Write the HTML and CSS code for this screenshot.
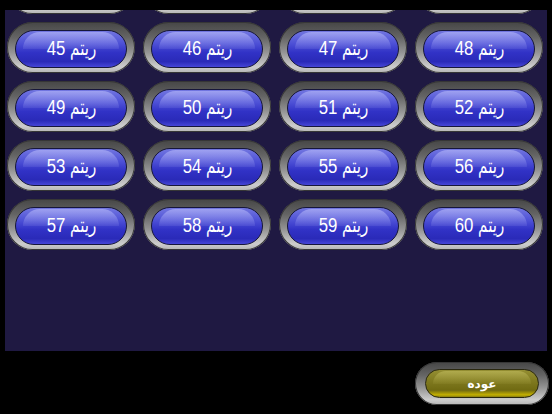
FILE: index.html
```html
<!DOCTYPE html>
<html lang="ar">
<head>
<meta charset="utf-8">
<link rel="stylesheet" href="styles.css">
</head>
<body>
<div class="panel">
  <div class="grid">
    <div class="btn"><div class="pill"></div></div>
    <div class="btn"><div class="pill"></div></div>
    <div class="btn"><div class="pill"></div></div>
    <div class="btn"><div class="pill"></div></div>
    <div class="btn"><div class="pill"><span class="label" dir="rtl">ريتم 45</span></div></div>
    <div class="btn"><div class="pill"><span class="label" dir="rtl">ريتم 46</span></div></div>
    <div class="btn"><div class="pill"><span class="label" dir="rtl">ريتم 47</span></div></div>
    <div class="btn"><div class="pill"><span class="label" dir="rtl">ريتم 48</span></div></div>
    <div class="btn"><div class="pill"><span class="label" dir="rtl">ريتم 49</span></div></div>
    <div class="btn"><div class="pill"><span class="label" dir="rtl">ريتم 50</span></div></div>
    <div class="btn"><div class="pill"><span class="label" dir="rtl">ريتم 51</span></div></div>
    <div class="btn"><div class="pill"><span class="label" dir="rtl">ريتم 52</span></div></div>
    <div class="btn"><div class="pill"><span class="label" dir="rtl">ريتم 53</span></div></div>
    <div class="btn"><div class="pill"><span class="label" dir="rtl">ريتم 54</span></div></div>
    <div class="btn"><div class="pill"><span class="label" dir="rtl">ريتم 55</span></div></div>
    <div class="btn"><div class="pill"><span class="label" dir="rtl">ريتم 56</span></div></div>
    <div class="btn"><div class="pill"><span class="label" dir="rtl">ريتم 57</span></div></div>
    <div class="btn"><div class="pill"><span class="label" dir="rtl">ريتم 58</span></div></div>
    <div class="btn"><div class="pill"><span class="label" dir="rtl">ريتم 59</span></div></div>
    <div class="btn"><div class="pill"><span class="label" dir="rtl">ريتم 60</span></div></div>
  </div>
</div>
<div class="footer">
  <div class="btn back"><div class="pill gold" dir="rtl">عوده</div></div>
</div>
</body>
</html>
```
FILE: styles.css
```css
html, body {
  margin: 0;
  padding: 0;
  background: #000;
  width: 552px;
  height: 414px;
  overflow: hidden;
  font-family: "Liberation Sans", "DejaVu Sans Condensed", "DejaVu Sans", sans-serif;
}
.panel {
  margin: 10px 5px 0 5px;
  height: 341px;
  background: #1f1942;
  overflow: hidden;
}
.grid {
  display: grid;
  grid-template-columns: repeat(4, 128px);
  grid-auto-rows: 51px;
  column-gap: 8px;
  row-gap: 8px;
  margin-top: -47px;
  padding-left: 2px;
}
.btn {
  box-sizing: border-box;
  border-radius: 999px;
  padding: 8px 8px 5px 8px;
  background: linear-gradient(#464646 0%, #646464 30%, #959595 60%, #cdcdcd 88%, #b4b4b4 100%);
  box-shadow: inset 0 0 0 1px #363636;
}
.pill {
  position: relative;
  box-sizing: border-box;
  height: 100%;
  border-radius: 999px;
  border: 1px solid #16163a;
  background: linear-gradient(#7276e0 0%, #4d50d6 35%, #3132c6 60%, #2a2ab8 85%, #4646d8 100%);
  display: flex;
  align-items: center;
  justify-content: center;
  color: #fff;
  font-size: 20px;
  overflow: hidden;
}
.pill::before {
  content: "";
  position: absolute;
  left: 6%;
  right: 6%;
  top: 1px;
  height: 48%;
  border-radius: 999px 999px 50% 50% / 999px 999px 60% 60%;
  background: linear-gradient(rgba(195,197,255,0.55), rgba(150,152,240,0.15));
}
.label {
  position: relative;
  display: inline-block;
  transform: scaleX(0.84);
  margin-top: -2px;
  white-space: nowrap;
}
.footer {
  display: flex;
  justify-content: flex-end;
  padding: 11px 3px 0 0;
}
.back {
  width: 134px;
  height: 43px;
  padding: 7px 10px 7px 10px;
}
.pill.gold {
  border-color: #2a2810;
  background: linear-gradient(#948e32 0%, #807a20 40%, #706a12 75%, #c4b000 92%, #867c10 100%);
  font-family: "DejaVu Sans", sans-serif;
  font-size: 12px;
  font-weight: bold;
}
.pill.gold::before {
  background: linear-gradient(rgba(220,215,120,0.4), rgba(200,195,90,0.08));
}
```
